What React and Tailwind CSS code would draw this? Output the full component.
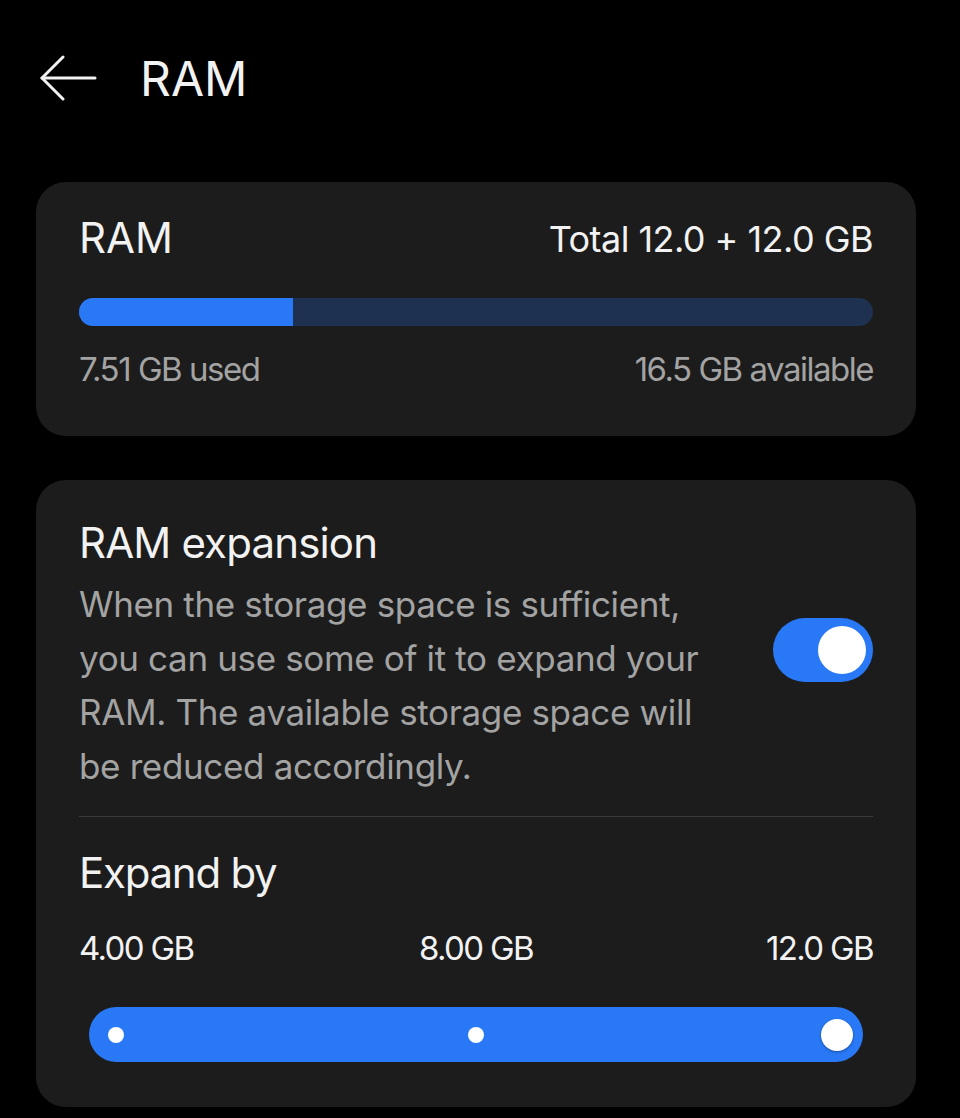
import React from 'react';

const BackArrow = () => (
  <svg width="60" height="48" viewBox="0 0 60 48" fill="none" stroke="#f2f2f2" strokeWidth="3" strokeLinecap="round" strokeLinejoin="round">
    <path d="M4 23 H57" />
    <path d="M25 2 L4 23 L25 44" />
  </svg>
);

const Toggle = () => (
  <div className="flex items-center justify-end w-[100px] h-[64px] rounded-full bg-[#2979f6] pr-[7px] shrink-0">
    <div className="w-[48px] h-[48px] rounded-full bg-white" />
  </div>
);

export default function App() {
  return (
    <div className="min-h-[1118px] bg-black text-[#f2f2f2] font-['Inter',sans-serif]">
      <div className="flex items-center pt-[55px] pl-[38px]">
        <BackArrow />
        <h1 className="ml-[42px] text-[48px] leading-none font-normal">RAM</h1>
      </div>

      <div className="ml-[36px] mr-[44px] mt-[79px] rounded-[30px] bg-[#1c1c1c] px-[43px] pt-[35px] pb-[50px]">
        <div className="flex items-start justify-between">
          <span className="text-[42px] leading-none">RAM</span>
          <span className="text-[36px] leading-none mt-[4px] tracking-[-0.015em]">Total 12.0 + 12.0 GB</span>
        </div>
        <div className="mt-[39px] h-[28px] rounded-full bg-[#1f3150] overflow-hidden">
          <div className="h-full w-[214px] bg-[#2979f6]" />
        </div>
        <div className="mt-[27px] flex justify-between text-[33px] leading-none text-[#a3a3a3] tracking-[-0.045em]">
          <span>7.51 GB used</span>
          <span>16.5 GB available</span>
        </div>
      </div>

      <div className="ml-[36px] mr-[44px] mt-[44px] rounded-[30px] bg-[#1c1c1c] px-[43px] pt-[42px] pb-[45px]">
        <div className="flex items-start justify-between">
          <div>
            <div className="text-[42px] leading-none tracking-[-0.02em]">RAM expansion</div>
            <p className="mt-[13px] w-[640px] text-[35px] leading-[54px] text-[#a3a3a3] tracking-[-0.01em]">
              When the storage space is sufficient, you can use some of it to expand your RAM. The available storage space will be reduced accordingly.
            </p>
          </div>
          <div className="mt-[96px]">
            <Toggle />
          </div>
        </div>

        <div className="mt-[23px] h-px bg-[#3a3a3a]" />

        <div className="mt-[35px] text-[42px] leading-none tracking-[-0.03em]">Expand by</div>

        <div className="mt-[38px] grid grid-cols-3 text-[33px] leading-none tracking-[-0.05em]">
          <span className="text-left">4.00 GB</span>
          <span className="text-center">8.00 GB</span>
          <span className="text-right">12.0 GB</span>
        </div>

        <div className="relative mx-[10px] mt-[42px] h-[55px] rounded-full bg-[#2979f6]">
          <div className="absolute left-[19px] top-1/2 -translate-y-1/2 w-[16px] h-[16px] rounded-full bg-white" />
          <div className="absolute left-1/2 top-1/2 -translate-x-1/2 -translate-y-1/2 w-[16px] h-[16px] rounded-full bg-white" />
          <div className="absolute right-[10px] top-1/2 -translate-y-1/2 w-[32px] h-[32px] rounded-full bg-white shadow-[0_1px_3px_rgba(0,0,0,0.35)]" />
        </div>
      </div>
    </div>
  );
}
